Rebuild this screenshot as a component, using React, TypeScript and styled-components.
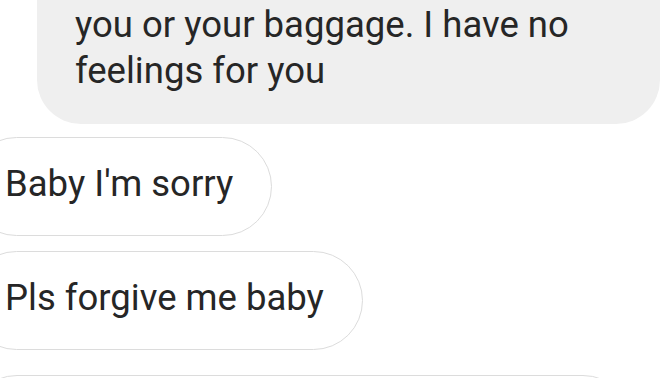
import React from "react";
import styled, { createGlobalStyle } from "styled-components";

const GlobalStyle = createGlobalStyle`
  html, body {
    margin: 0;
    padding: 0;
    background: #ffffff;
  }
  body {
    font-family: Roboto, "Liberation Sans", Arial, sans-serif;
    -webkit-font-smoothing: antialiased;
  }
`;

const Screen = styled.div`
  width: 672px;
  height: 378px;
  overflow: hidden;
  background: #ffffff;
`;

const Thread = styled.div`
  display: flex;
  flex-direction: column;
  align-items: flex-start;
  margin: -70px 0 0 -33px;
`;

const Bubble = styled.div<{ $gap?: number }>`
  box-sizing: border-box;
  margin-top: ${(p) => p.$gap ?? 0}px;
  font-size: 36.5px;
  line-height: 46px;
  color: #262626;
  white-space: nowrap;
`;

const ReceivedBubble = styled(Bubble)`
  margin-left: 70px;
  width: 623px;
  padding: 72px 38px 30px 38px;
  background: #efefef;
  border-radius: 44px;
`;

const SentBubble = styled(Bubble)<{ $width?: number; $height?: number }>`
  width: ${(p) => (p.$width ? `${p.$width}px` : "auto")};
  min-height: ${(p) => (p.$height ? `${p.$height}px` : "0")};
  padding: 23px 38px 28px 37px;
  background: #ffffff;
  border: 1.5px solid #dcdcdc;
  border-radius: 50px;
`;

export default function App() {
  return (
    <>
      <GlobalStyle />
      <Screen>
        <Thread>
          <ReceivedBubble>
            you or your baggage. I have no
            <br />
            feelings for you
          </ReceivedBubble>
          <SentBubble $gap={13}>Baby I'm sorry</SentBubble>
          <SentBubble $gap={15}>Pls forgive me baby</SentBubble>
          <SentBubble $gap={25} $width={666} $height={100} />
        </Thread>
      </Screen>
    </>
  );
}
